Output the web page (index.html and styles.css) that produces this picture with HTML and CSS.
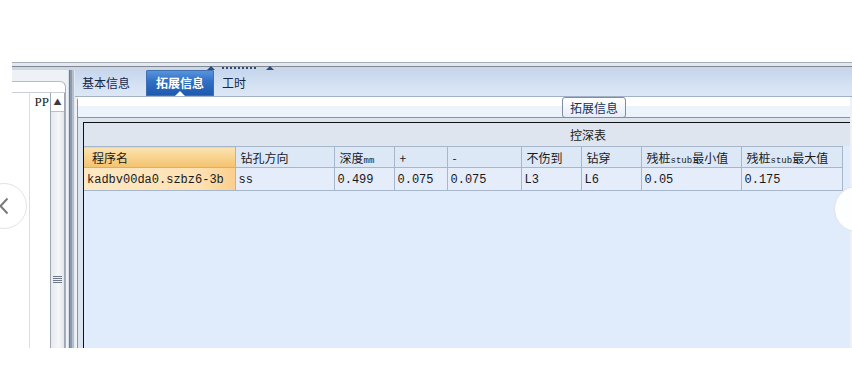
FILE: index.html
```html
<!DOCTYPE html>
<html>
  <head>
    <meta charset="utf-8">
    <title>拓展信息</title>
    <link rel="stylesheet" href="styles.css">
  </head>
  <body>
    <div class="app">
      <div class="hbar">
        <span class="hbar-arrow"></span>
        <span class="hbar-grip"></span>
        <span class="hbar-arrow"></span>
      </div>

      <div class="main">
        <div class="side-panel">
          <div class="side-top"></div>
          <div class="side-rest">
            <div class="side-grid">
              <div class="col-a"></div>
              <div class="col-b"><div class="side-head">PP</div></div>
            </div>
            <div class="vscroll">
              <div class="vscroll-up">&#9650;</div>
              <div class="vscroll-thumb"><span class="grip"></span></div>
            </div>
          </div>
        </div>

        <div class="vsplit"></div>

        <div class="right">
          <div class="tabs">
            <div class="tab">基本信息</div>
            <div class="tab active">拓展信息</div>
            <div class="tab">工时</div>
          </div>

          <div class="content">
            <div class="group-head">
              <div class="group-title">拓展信息</div>
            </div>
            <div class="group-body">
              <div class="table-box">
                <div class="band">控深表</div>
                <table class="grid">
                  <colgroup>
                    <col style="width:151px">
                    <col style="width:99px">
                    <col style="width:60px">
                    <col style="width:53px">
                    <col style="width:74px">
                    <col style="width:60px">
                    <col style="width:60px">
                    <col style="width:100px">
                    <col style="width:101px">
                  </colgroup>
                  <tr class="head">
                    <th class="key">程序名</th>
                    <th>钻孔方向</th>
                    <th>深度<small>mm</small></th>
                    <th>+</th>
                    <th>-</th>
                    <th>不伤到</th>
                    <th>钻穿</th>
                    <th>残桩<small>stub</small>最小值</th>
                    <th>残桩<small>stub</small>最大值</th>
                  </tr>
                  <tr class="row">
                    <td class="key">kadbv00da0.szbz6-3b</td>
                    <td>ss</td>
                    <td>0.499</td>
                    <td>0.075</td>
                    <td>0.075</td>
                    <td>L3</td>
                    <td>L6</td>
                    <td>0.05</td>
                    <td>0.175</td>
                  </tr>
                </table>
              </div>
            </div>
          </div>
        </div>
      </div>
    </div>

    <button class="nav nav-prev">
      <svg width="10" height="18" viewBox="0 0 10 18">
        <polyline points="8.5,1.5 1.5,9 8.5,16.5" fill="none" stroke="#7a7a7a" stroke-width="2"/>
      </svg>
    </button>
    <button class="nav nav-next"></button>
  </body>
</html>
```

FILE: styles.css
```css
* {
  box-sizing: border-box;
  margin: 0;
  padding: 0;
}

body {
  position: relative;
  width: 852px;
  height: 379px;
  overflow: hidden;
  background-color: #ffffff;
  font-family: "Noto Sans CJK SC", "Liberation Sans", sans-serif;
  font-size: 12px;
  color: #1a1a1a;
}

/* Marco general */
.app {
  display: flex;
  flex-direction: column;
  width: 840px;
  height: 286px;
  margin: 62px 0 0 12px;
  background-color: #eef1f5;
}

/* Barra separadora superior */
.hbar {
  display: flex;
  align-items: flex-end;
  height: 8px;
  padding-left: 195px;
  background: linear-gradient(to bottom,
    #a3abb7 0 1px, #e4e8ee 1px 4px, #7d8898 4px 5px, #cfd6df 5px 8px);
}

.hbar-arrow {
  width: 0;
  height: 0;
  border-left: 4px solid transparent;
  border-right: 4px solid transparent;
  border-bottom: 4px solid #2d4c78;
}

.hbar-grip {
  width: 34px;
  height: 2px;
  margin: 0 10px 1px 7px;
  background: repeating-linear-gradient(to right, #2d4c78 0 2px, transparent 2px 4px);
}

.main {
  display: flex;
  flex: 1;
  min-height: 0;
}

/* Panel izquierdo */
.side-panel {
  display: flex;
  flex-direction: column;
  width: 54px;
  margin-top: 11px;
  background-color: #ffffff;
  border-top: 1px solid #b3bcc8;
  border-right: 1px solid #a7b1bd;
  border-top-right-radius: 6px;
}

.side-top {
  height: 11px;
  border-bottom: 1px solid #c9cfd8;
}

.side-rest {
  display: flex;
  flex: 1;
}

.side-grid {
  display: flex;
  width: 38px;
}

.col-a {
  width: 18px;
  border-right: 1px solid #dadee4;
}

.col-b {
  flex: 1;
}

.side-head {
  height: 18px;
  line-height: 18px;
  text-align: right;
  padding-right: 1px;
  font-family: "Liberation Serif", serif;
  font-size: 13px;
  color: #222;
}

.vscroll {
  display: flex;
  flex-direction: column;
  width: 15px;
  border-left: 1px solid #9ea7b3;
  border-right: 1px solid #9ea7b3;
  background-color: #eceef2;
}

.vscroll-up {
  height: 18px;
  line-height: 18px;
  text-align: center;
  font-size: 8px;
  color: #3a3a3a;
  background-color: #ffffff;
}

.vscroll-thumb {
  display: flex;
  align-items: center;
  justify-content: center;
  flex: 1;
  background: linear-gradient(to right, #e6e9ee, #f5f6f8 60%, #e2e6eb);
  border-top: 1px solid #b9c0ca;
}

.grip {
  width: 9px;
  height: 7px;
  margin-top: 98px;
  background: repeating-linear-gradient(to bottom, #6f7886 0 1px, transparent 1px 2px);
}

/* Separador vertical */
.vsplit {
  width: 7px;
  margin-left: 2px;
  background: linear-gradient(to right,
    #d9dfe7 0 1px, #6d7d92 1px 2px, #8b9aae 2px 4px,
    #b4bfcd 4px 6px, #e3e8ee 6px 7px);
}

/* Panel derecho */
.right {
  display: flex;
  flex-direction: column;
  flex: 1;
  min-width: 0;
}

.tabs {
  display: flex;
  align-items: flex-end;
  height: 27px;
  padding-left: 7px;
  background: linear-gradient(to bottom, #c6d6ed, #d5e2f3 60%, #dce7f5);
  border-bottom: 1px solid #9fb0c7;
}

.tab {
  height: 26px;
  line-height: 25px;
  padding: 0 8px 0 0;
  color: #15284a;
  font-size: 12px;
}

.tab.active {
  position: relative;
  margin-left: 8px;
  margin-right: 8px;
  padding: 0 10px;
  color: #ffffff;
  font-weight: bold;
  border-radius: 2px 2px 0 0;
  background: linear-gradient(to bottom, #5c97de, #2f6fc4 45%, #1d58ad);
  box-shadow: inset 0 0 0 1px #3f6fae;
}

/* muesca blanca del tab activo */
.tab.active::after {
  content: "";
  position: absolute;
  left: 29px;
  bottom: 0;
  border-left: 5px solid transparent;
  border-right: 5px solid transparent;
  border-bottom: 5px solid #ffffff;
}

.content {
  display: flex;
  flex-direction: column;
  flex: 1;
  margin: 0 2px;
  border-left: 1px solid #8593a8;
  border-top-left-radius: 4px;
  background-color: #ffffff;
}

.group-head {
  height: 21px;
  padding-left: 484px;
  background: linear-gradient(to bottom,
    #ffffff 0 9px, #edf3fb 9px 20px, #8593a8 20px 21px);
}

.group-title {
  display: inline-block;
  height: 21px;
  line-height: 19px;
  padding: 0 7px;
  border: 1px solid #7f8da3;
  border-radius: 3px;
  background: linear-gradient(to bottom, #ffffff, #e6eef9);
  color: #15325c;
  font-size: 12px;
}

.group-body {
  display: flex;
  flex: 1;
  padding: 4px 0 0 5px;
  background-color: #dce4ef;
}

.table-box {
  flex: 1;
  border-top: 1px solid #111111;
  border-left: 1px solid #111111;
  background-color: #e0ebfb;
}

.band {
  height: 23px;
  line-height: 23px;
  padding-left: 486px;
  background-color: #dee5ef;
  color: #1a1a1a;
}

.grid {
  border-collapse: collapse;
  table-layout: fixed;
  width: 758px;
}

.grid th,
.grid td {
  border: 1px solid #a6b6cb;
  border-left: none;
  text-align: left;
  white-space: nowrap;
  overflow: hidden;
}

.grid th {
  height: 21px;
  padding-left: 5px;
  font-weight: normal;
  background-color: #dde8f7;
  color: #1a1a1a;
}

.grid th small {
  font-family: "Liberation Mono", monospace;
  font-size: 9px;
}

.grid th.key {
  padding-left: 8px;
  background: linear-gradient(to bottom, #fbe3b3, #f8d38f 50%, #f4c26c);
}

.grid td {
  height: 23px;
  padding: 2px 0 0 3px;
  font-family: "Liberation Mono", monospace;
  font-size: 12px;
  color: #1a1a1a;
  background-color: #e5edfa;
}

.grid td.key {
  background: linear-gradient(to right, #fde8c3, #fde2b4 75%, #fbcf8c);
}

/* Botones circulares de navegación */
.nav {
  position: absolute;
  display: flex;
  align-items: center;
  justify-content: center;
  width: 46px;
  height: 46px;
  border: 1px solid #e3e3e3;
  border-radius: 50%;
  background-color: rgba(255, 255, 255, 0.92);
}

.nav-prev {
  left: -19px;
  top: 183px;
}

.nav-next {
  left: 834px;
  top: 186px;
}
```
